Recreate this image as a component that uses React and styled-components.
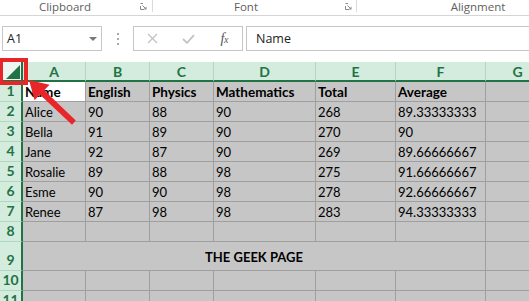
import React from 'react';
import styled, { createGlobalStyle } from 'styled-components';

const Global = createGlobalStyle`
  html, body { margin: 0; padding: 0; background: #fff; }
  body { width: 529px; height: 301px; overflow: hidden; font-family: Lato, "Open Sans", sans-serif; }
  * { box-sizing: border-box; }
`;

const Page = styled.div`
  position: relative;
  width: 529px;
  height: 301px;
  overflow: hidden;
  background: #fff;
`;

/* ---------- ribbon group labels ---------- */
const Ribbon = styled.div`
  display: flex;
  height: 16px;
  border-bottom: 1px solid #d5d5d5;
  font-family: "Open Sans", sans-serif;
  font-size: 11.5px;
  color: #606060;
  white-space: nowrap;
`;
const Group = styled.div`
  display: flex;
  align-items: flex-start;
  flex: none;
`;
const GroupLabel = styled.div`
  width: ${p => p.$w}px;
  text-align: center;
  line-height: 14px;
  flex: none;
`;
const Launcher = styled.div`
  width: 7px;
  height: 7px;
  margin-top: 3px;
  margin-left: ${p => p.$gap}px;
  margin-right: ${p => p.$after}px;
  display: flex;
  flex: none;
`;
const GroupSep = styled.div`
  width: 1px;
  height: 12px;
  background: #dadada;
  flex: none;
`;

const LauncherIcon = () => (
  <svg width="7" height="7" viewBox="0 0 7 7">
    <path d="M0.5 3 V6.5 H4" fill="none" stroke="#8a8a8a" strokeWidth="1" />
    <path d="M0.5 0.5 H3" fill="none" stroke="#8a8a8a" strokeWidth="1" />
    <path d="M2.5 2.5 L6 6" stroke="#8a8a8a" strokeWidth="1" />
    <path d="M6.5 3.5 V6.5 H3.5 Z" fill="#8a8a8a" />
  </svg>
);

/* ---------- formula bar ---------- */
const FormulaBar = styled.div`
  display: flex;
  align-items: stretch;
  height: 46px;
  padding: 10px 0 11px 2px;
  font-family: "Open Sans", sans-serif;
  font-size: 12.5px;
  color: #222;
`;
const NameBox = styled.div`
  width: 100px;
  flex: none;
  border: 1px solid #c6c6c6;
  display: flex;
  align-items: center;
  justify-content: space-between;
  padding: 0 4px 0 4px;
`;
const DropArrow = styled.div`
  width: 0;
  height: 0;
  border-left: 4px solid transparent;
  border-right: 4px solid transparent;
  border-top: 4px solid #777;
  margin-top: 1px;
`;
const Dots = styled.div`
  width: 31px;
  flex: none;
  display: flex;
  flex-direction: column;
  align-items: center;
  justify-content: center;
  gap: 3px;
`;
const Dot = styled.div`
  width: 2px;
  height: 2px;
  background: #a8a8a8;
`;
const ActionBox = styled.div`
  width: 110px;
  flex: none;
  border: 1px solid #c6c6c6;
  display: flex;
  align-items: center;
  padding-left: 1px;
`;
const ActionSlot = styled.div`
  width: 36px;
  display: flex;
  justify-content: center;
  align-items: center;
`;
const Fx = styled.span`
  font-family: "Liberation Serif", serif;
  font-style: italic;
  font-size: 14px;
  color: #555;
  letter-spacing: -0.5px;
  & small { font-size: 10px; }
`;
const FormulaInput = styled.div`
  flex: none;
  width: 320px;
  margin-left: 3px;
  border: 1px solid #c6c6c6;
  display: flex;
  align-items: center;
  padding-left: 9px;
`;

/* ---------- sheet ---------- */
const COLS = [63, 64, 64, 102, 80, 90, 64];
const TEMPLATE = `23px ${COLS.map(c => c + 'px').join(' ')}`;

const Sheet = styled.div`
  display: flex;
  flex-direction: column;
  font-family: Lato, sans-serif;
  font-size: 13px;
  color: #000;
`;
const SheetRow = styled.div`
  display: grid;
  grid-template-columns: ${TEMPLATE};
  height: ${p => p.$h}px;
  flex: none;
`;
const Corner = styled.div`
  position: relative;
  background: #eef6f1;
  border-right: 2px solid #217346;
  border-bottom: 2px solid #217346;
`;
const CornerTri = styled.div`
  position: absolute;
  right: 1px;
  bottom: 1px;
  width: 0;
  height: 0;
  border-left: 14px solid transparent;
  border-bottom: 14px solid #217346;
`;
const ColHead = styled.div`
  background: #d3ecdd;
  border-right: 1px solid #b2d6c0;
  border-bottom: 2px solid #217346;
  color: #217346;
  font-weight: 700;
  font-size: 14px;
  display: flex;
  align-items: center;
  justify-content: center;
`;
const RowHead = styled.div`
  background: #d3ecdd;
  border-right: 2px solid #217346;
  border-bottom: 1px solid #b2d6c0;
  color: #217346;
  font-weight: 700;
  font-size: 14px;
  line-height: 18px;
  display: flex;
  align-items: flex-end;
  justify-content: center;
  padding-bottom: 1px;
`;
const Cell = styled.div`
  background: ${p => (p.$active ? '#fff' : '#c6c6c6')};
  border-right: 1px solid #9f9f9f;
  border-bottom: 1px solid #9f9f9f;
  padding: 1px 0 0 2px;
  line-height: 18px;
  font-weight: ${p => (p.$bold ? 700 : 400)};
  font-size: ${p => (p.$bold ? '13.5px' : '13px')};
  white-space: nowrap;
  overflow: hidden;
`;
const MergedCell = styled.div`
  grid-column: span 6;
  background: #c6c6c6;
  border-right: 1px solid #9f9f9f;
  border-bottom: 1px solid #9f9f9f;
  display: flex;
  align-items: center;
  justify-content: center;
  font-weight: 700;
  font-size: 13px;
  padding-top: 2px;
`;

/* ---------- annotations ---------- */
const RedBox = styled.div`
  position: absolute;
  left: -1px;
  top: 58px;
  width: 29px;
  height: 27px;
  border: 4px solid #e8262a;
  pointer-events: none;
`;
const ArrowLayer = styled.svg`
  position: absolute;
  left: 0;
  top: 0;
  pointer-events: none;
`;

const letters = ['A', 'B', 'C', 'D', 'E', 'F', 'G'];
const data = [
  ['Name', 'English', 'Physics', 'Mathematics', 'Total', 'Average'],
  ['Alice', '90', '88', '90', '268', '89.33333333'],
  ['Bella', '91', '89', '90', '270', '90'],
  ['Jane', '92', '87', '90', '269', '89.66666667'],
  ['Rosalie', '89', '88', '98', '275', '91.66666667'],
  ['Esme', '90', '90', '98', '278', '92.66666667'],
  ['Renee', '87', '98', '98', '283', '94.33333333'],
];

export default function App() {
  const rows = [];
  data.forEach((r, i) => {
    rows.push(
      <SheetRow key={'r' + i} $h={20}>
        <RowHead>{i + 1}</RowHead>
        {r.map((v, j) => (
          <Cell key={j} $bold={i === 0} $active={i === 0 && j === 0}>{v}</Cell>
        ))}
        <Cell />
      </SheetRow>
    );
  });
  const emptyRow = (n, h) => (
    <SheetRow key={'r' + n} $h={h}>
      <RowHead>{n}</RowHead>
      {letters.map(l => <Cell key={l} />)}
    </SheetRow>
  );

  return (
    <Page>
      <Global />
      <Ribbon>
        <Group>
          <GroupLabel $w={130}>Clipboard</GroupLabel>
          <Launcher $gap={10} $after={5}><LauncherIcon /></Launcher>
          <GroupSep />
        </Group>
        <Group>
          <GroupLabel $w={186}>Font</GroupLabel>
          <Launcher $gap={6} $after={4}><LauncherIcon /></Launcher>
          <GroupSep />
        </Group>
        <Group>
          <GroupLabel $w={242}>Alignment</GroupLabel>
        </Group>
      </Ribbon>

      <FormulaBar>
        <NameBox>
          <span>A1</span>
          <DropArrow />
        </NameBox>
        <Dots><Dot /><Dot /><Dot /></Dots>
        <ActionBox>
          <ActionSlot>
            <svg width="11" height="11" viewBox="0 0 11 11">
              <path d="M1 1 L10 10 M10 1 L1 10" stroke="#c2c2c2" strokeWidth="1.3" />
            </svg>
          </ActionSlot>
          <ActionSlot>
            <svg width="13" height="10" viewBox="0 0 13 10">
              <path d="M1 5 L5 8.8 L12 1.2" fill="none" stroke="#c2c2c2" strokeWidth="1.8" />
            </svg>
          </ActionSlot>
          <ActionSlot>
            <Fx>f<small>x</small></Fx>
          </ActionSlot>
        </ActionBox>
        <FormulaInput>Name</FormulaInput>
      </FormulaBar>

      <Sheet>
        <SheetRow $h={20}>
          <Corner><CornerTri /></Corner>
          {letters.map(l => <ColHead key={l}>{l}</ColHead>)}
        </SheetRow>
        {rows}
        {emptyRow(8, 20)}
        <SheetRow $h={29}>
          <RowHead>9</RowHead>
          <MergedCell>THE GEEK PAGE</MergedCell>
          <Cell />
        </SheetRow>
        {emptyRow(10, 20)}
        {emptyRow(11, 20)}
      </Sheet>

      <RedBox />
      <ArrowLayer width="529" height="301" viewBox="0 0 529 301">
        <polygon
          points="29,80 49.5,84.8 44.2,90.2 75.8,120.6 72,124.8 39.8,94.6 34.6,100.2"
          fill="#e8262a"
        />
      </ArrowLayer>
    </Page>
  );
}
